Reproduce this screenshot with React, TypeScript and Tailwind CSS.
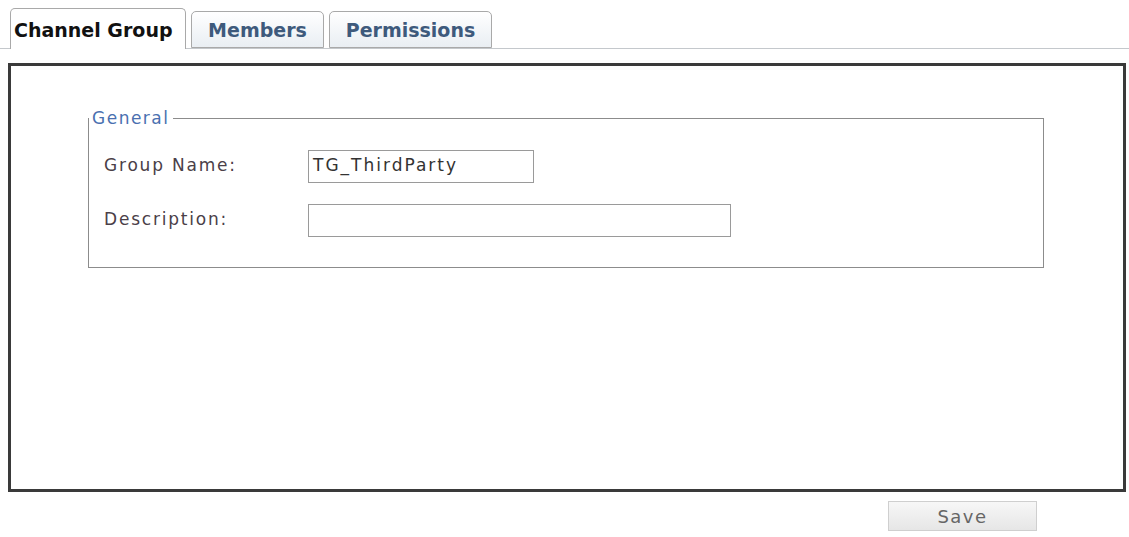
import type { ReactNode } from 'react'

const font = { fontFamily: '"DejaVu Sans", Verdana, sans-serif' }

function Tab({ active, children, width }: { active?: boolean; children: ReactNode; width: string }) {
  return (
    <div
      className={
        active
          ? `-mb-px flex h-[41px] items-center rounded-t-[5px] border border-b-0 border-[#a9a9a9] bg-white pl-[3px] pt-[3px] text-[19px] font-bold text-[#111] ${width}`
          : `flex h-[37px] items-center justify-center rounded-t-[5px] border border-[#a9a9a9] bg-gradient-to-b from-white to-[#e9eef3] pt-[2px] text-[19px] font-bold text-[#3e5a7c] ${width}`
      }
    >
      {children}
    </div>
  )
}

function Field({ label, value, width }: { label: string; value?: string; width: string }) {
  return (
    <div className="flex items-center">
      <span className="w-[204px] text-[17px] tracking-[1.8px] text-[#4a4048]">{label}</span>
      <div
        className={`flex h-[33px] items-center border border-[#9a9a9a] bg-white px-[4px] text-[17px] tracking-[2px] text-[#333] ${width}`}
      >
        {value}
      </div>
    </div>
  )
}

export default function App() {
  return (
    <div className="h-[537px] w-[1129px] overflow-hidden bg-white" style={font}>
      <div className="flex items-end gap-[5px] border-b border-[#c4c8cc] pl-[10px] pt-[8px]">
        <Tab active width="w-[176px]">
          Channel Group
        </Tab>
        <Tab width="w-[133px]">Members</Tab>
        <Tab width="w-[163px]">Permissions</Tab>
      </div>

      <div className="ml-[8px] mr-[3px] mt-[14px] h-[429px] border-[3px] border-[#3a3a3a] pl-[77px] pr-[79px] pt-[40px]">
        <fieldset className="h-[162px] border border-[#8c8c8c] pl-[15px]">
          <legend className="ml-[-15px] px-[3px] text-[17px] tracking-[1.5px] text-[#4a70b0]">General</legend>
          <div className="mt-[18px] flex flex-col gap-[21px]">
            <Field label="Group Name:" value="TG_ThirdParty" width="w-[226px]" />
            <Field label="Description:" width="w-[423px]" />
          </div>
        </fieldset>
      </div>

      <div className="mt-[9px] flex justify-end pr-[92px]">
        <button
          type="button"
          className="h-[30px] w-[149px] border border-[#cfcfcf] bg-gradient-to-b from-[#f7f7f7] to-[#e6e6e6] text-[18px] tracking-[1.5px] text-[#666]"
        >
          Save
        </button>
      </div>
    </div>
  )
}
